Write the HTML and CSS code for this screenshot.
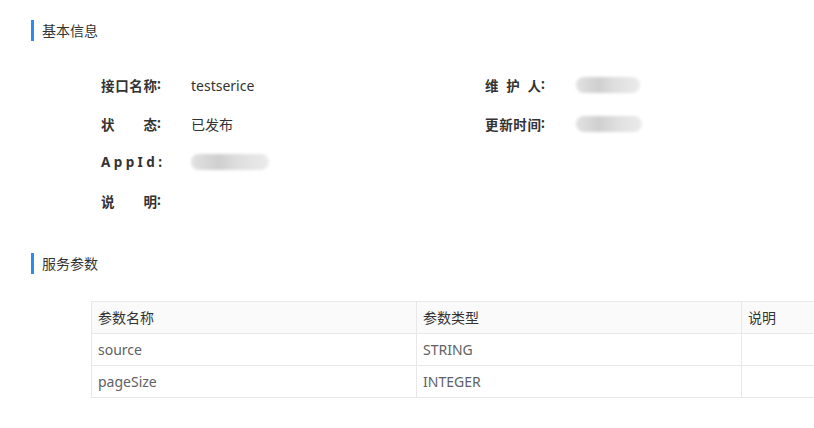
FILE: index.html
```html
<!DOCTYPE html>
<html lang="zh-CN">
<head>
<meta charset="utf-8">
<title>接口详情</title>
<link rel="stylesheet" href="styles.css">
</head>
<body>
<div class="page">
  <div class="section-title">基本信息</div>
  <div class="info">
    <div class="info-col">
      <div class="row"><span class="label"><span class="lt">接口名称</span>:</span><span class="value">testserice</span></div>
      <div class="row"><span class="label"><span class="lt">状态</span>:</span><span class="value">已发布</span></div>
      <div class="row"><span class="label"><span class="lt latin">AppId</span>:</span><span class="value"><span class="masked w80"></span></span></div>
      <div class="row"><span class="label"><span class="lt">说明</span>:</span><span class="value"></span></div>
    </div>
    <div class="info-col right">
      <div class="row"><span class="label"><span class="lt">维护人</span>:</span><span class="value"><span class="masked w64"></span></span></div>
      <div class="row"><span class="label"><span class="lt">更新时间</span>:</span><span class="value"><span class="masked w72"></span></span></div>
    </div>
  </div>
  <div class="section-title second">服务参数</div>
  <div class="table-wrap">
    <table class="params">
      <thead>
        <tr><th>参数名称</th><th>参数类型</th><th>说明</th></tr>
      </thead>
      <tbody>
        <tr><td>source</td><td>STRING</td><td></td></tr>
        <tr><td>pageSize</td><td>INTEGER</td><td></td></tr>
      </tbody>
    </table>
  </div>
</div>
</body>
</html>
```
FILE: styles.css
```css
html, body {
  margin: 0;
  padding: 0;
  background: #ffffff;
  overflow: hidden;
}
body {
  font-family: "Noto Sans", "Noto Sans CJK SC", sans-serif;
  font-size: 14px;
  color: #333333;
}
.page {
  padding: 20px 0 0 31px;
  width: 1200px;
}
.section-title {
  border-left: 3px solid #2d8cf0;
  padding-left: 8px;
  height: 21px;
  line-height: 21px;
  font-size: 14px;
  color: #333;
}
.section-title.second {
  margin-top: 41px;
}
.info {
  display: flex;
  padding: 33px 0 0 70px;
}
.info-col {
  display: flex;
  flex-direction: column;
  gap: 16.5px;
  width: 384px;
}
.row {
  display: flex;
  align-items: center;
  height: 22px;
}
.label {
  display: flex;
  width: 60px;
  font-weight: bold;
  font-size: 13.5px;
  color: #333;
  white-space: nowrap;
}
.lt {
  display: inline-block;
  width: 56px;
  text-align: justify;
  text-align-last: justify;
}
.lt.latin {
  width: auto;
  letter-spacing: 3.4px;
  text-align: left;
  text-align-last: left;
}
.value {
  margin-left: 30px;
  color: #333;
  display: flex;
  align-items: center;
}
.right .value {
  margin-left: 31px;
}
.masked {
  display: inline-block;
  height: 16px;
  background: linear-gradient(90deg, #e2e2e2, #cfcfcf 35%, #dedede 60%, #ebebeb);
  border-radius: 8px;
  filter: blur(1.5px);
}
.w80 { width: 78px; }
.w64 { width: 64px; }
.w72 { width: 66px; }
.table-wrap {
  padding: 27px 0 0 60px;
}
.params {
  border-collapse: collapse;
  table-layout: fixed;
  width: 975px;
  font-size: 14px;
}
.params th, .params td {
  border: 1px solid #e8e8e8;
  height: 32px;
  padding: 0 6px;
  text-align: left;
  width: 325px;
  box-sizing: border-box;
}
.params th {
  background: #fafafa;
  font-weight: normal;
  color: #333;
}
.params td {
  color: #606266;
}
```
